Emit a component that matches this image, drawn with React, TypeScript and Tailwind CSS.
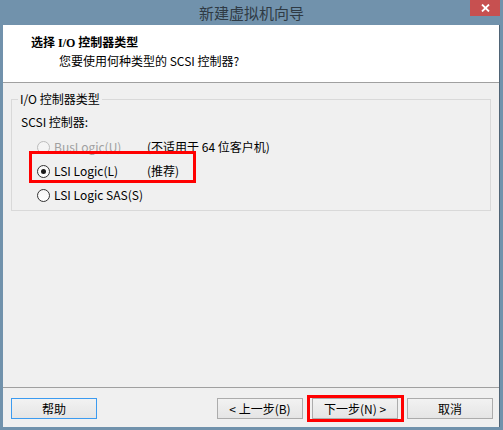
const font = { fontFamily: '"Noto Sans CJK SC", "Noto Sans", sans-serif' };

type RadioProps = { checked?: boolean; disabled?: boolean };

const Radio = ({ checked, disabled }: RadioProps) => (
  <span
    className={`flex h-[13px] w-[13px] shrink-0 items-center justify-center rounded-full border ${
      disabled ? "border-[#bcbcbc] bg-[#f4f4f4]" : "border-[#333333] bg-gradient-to-b from-[#f6f6f6] to-white"
    }`}
  >
    {checked && <span className="h-[5px] w-[5px] rounded-full bg-[#1a1a1a]" />}
  </span>
);

const Button = ({ label, focused }: { label: string; focused?: boolean }) => (
  <button
    className={`flex h-[21px] w-[86px] items-center justify-center border bg-gradient-to-b from-[#f2f2f2] to-[#e5e5e5] text-[12px] leading-none text-black ${
      focused ? "border-[#3c9bf0]" : "border-[#acacac]"
    }`}
  >
    {label}
  </button>
);

export default function App() {
  const options = [
    { label: "BusLogic(U)", note: "(不适用于 64 位客户机)", disabled: true },
    { label: "LSI Logic(L)", note: "(推荐)", checked: true },
    { label: "LSI Logic SAS(S)" },
  ];

  return (
    <div className="flex h-[430px] w-[503px] flex-col overflow-hidden bg-[#7192ac]" style={font}>
      {/* title bar */}
      <div className="relative flex h-[25px] shrink-0 items-center justify-center">
        <span className="text-[15px] leading-none text-[#2f3a44]">新建虚拟机向导</span>
        <div className="absolute right-[3px] top-0 flex h-[16px] w-[30px] items-center justify-center bg-[#c75050]">
          <svg width="9" height="8" viewBox="0 0 9 8">
            <path d="M1 0.5 L8 7.5 M8 0.5 L1 7.5" stroke="white" strokeWidth="1.8" />
          </svg>
        </div>
      </div>

      {/* client */}
      <div className="ml-[3px] mr-[3px] flex h-[402px] flex-col border-r border-[#4f6476] bg-[#f0f0f0]">
        <div className="h-[58px] shrink-0 border-b border-[#a0a0a0] bg-white pl-[28px] pt-[9px]">
          <div className="text-[12px] font-bold leading-[16px] text-black">
            <span style={{ fontFamily: '"Liberation Serif", "Noto Sans CJK SC", serif' }}>选择 I/O 控制器类型</span>
          </div>
          <div className="mt-[2px] pl-[28px] text-[12px] leading-[16px] text-black">您要使用何种类型的 SCSI 控制器?</div>
        </div>

        <div className="flex-1 pt-[8px]">
          <fieldset className="ml-[8px] h-[120px] w-[480px] border border-[#d9d9d9]">
            <legend className="ml-[6px] px-[2px] text-[12px] leading-[16px] text-black">I/O 控制器类型</legend>
            <div className="mt-[7px] pl-[9px] text-[12px] leading-[16px] text-black">SCSI 控制器:</div>
            <div className="relative mt-[5px]">
              {options.map((o) => (
                <div key={o.label} className="flex h-[24px] items-center pl-[25px] text-[12px]">
                  <Radio checked={o.checked} disabled={o.disabled} />
                  <span className={`ml-[4px] w-[93px] ${o.disabled ? "text-[#a0a0a0]" : "text-black"}`}>{o.label}</span>
                  {o.note && <span className="text-black">{o.note}</span>}
                </div>
              ))}
              <div className="pointer-events-none absolute left-[17px] top-[16px] h-[32px] w-[167px] border-[3px] border-[#ff0000]" />
            </div>
          </fieldset>
        </div>

        <div className="h-[40px] shrink-0 border-t border-[#a0a0a0] pl-[8px] pr-[6px] pt-[10px]">
          <div className="flex items-start">
            <Button label="帮助" focused />
            <div className="ml-auto flex gap-[9px]">
              <Button label="< 上一步(B)" />
              <div className="relative">
                <Button label="下一步(N) >" />
                <div className="pointer-events-none absolute left-[-5px] top-[-3px] h-[27px] w-[97px] border-[3px] border-[#ff0000]" />
              </div>
              <Button label="取消" />
            </div>
          </div>
        </div>
      </div>
    </div>
  );
}
